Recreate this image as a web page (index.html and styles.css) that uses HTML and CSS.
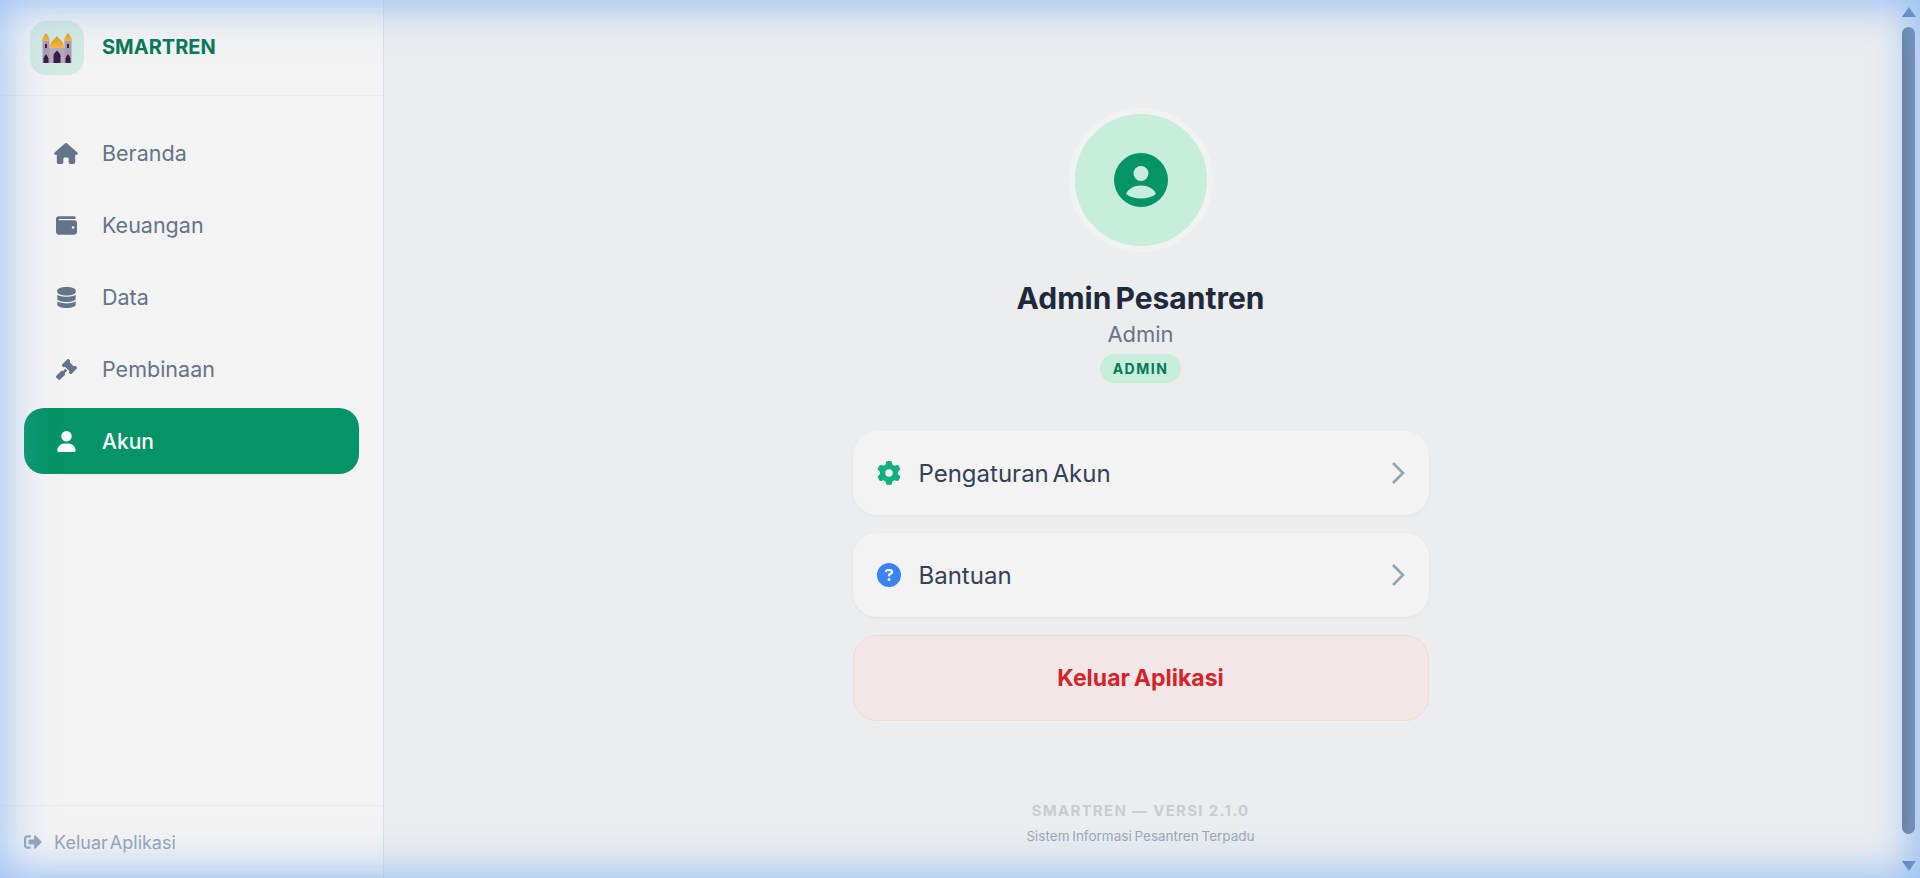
FILE: index.html
```html
<!DOCTYPE html>
<html lang="id">
<head>
  <meta charset="UTF-8">
  <meta name="viewport" content="width=device-width, initial-scale=1.0">
  <title>Smartren</title>
  <link rel="stylesheet" href="styles.css">
</head>
<body>
  <div class="app">
    <aside class="sidebar">
      <div class="brand">
        <div class="brand-logo">
          <svg viewBox="0 0 32 30" width="32" height="30">
            <defs>
              <linearGradient id="dome" x1="0" y1="0" x2="0" y2="1">
                <stop offset="0" stop-color="#e3952a"/>
                <stop offset="1" stop-color="#f5b93c"/>
              </linearGradient>
            </defs>
            <path d="M7 15h18v15H7z" fill="#b5abb9"/>
            <path d="M1.500 7.500h7v22.500h-7zM23.500 7.500h7v22.500h-7z" fill="#a99db0"/>
            <path d="M1 8c0-3 2-5 4-8 2 3 4 5 4 8zM23 8c0-3 2-5 4-8 2 3 4 5 4 8z" fill="url(#dome)"/>
            <path d="M9 15c-.5-6 4-8 7-12 3 4 7.500 6 7 12z" fill="url(#dome)"/>
            <path d="M2.500 30v-4c0-2 1.500-3 2.500-5 1 2 2.500 3 2.500 5v4zM24.500 30v-4c0-2 1.500-3 2.500-5 1 2 2.500 3 2.500 5v4zM12.500 30v-7c0-2.500 2-3.500 3.500-5.500 1.500 2 3.500 3 3.500 5.500v7z" fill="#3a1a4a"/>
            <path d="M4 11h2v4H4zM26 11h2v4h-2z" fill="#3a1a4a"/>
          </svg>
        </div>
        <span class="brand-name">SMARTREN</span>
      </div>

      <nav class="nav">
        <a class="nav-item">
          <span class="nav-icon"><svg viewBox="0 0 576 512" width="24" height="21"><path d="M575.800 255.500c0 18-15 32.100-32 32.100h-32l.7 160.200c0 2.700-.2 5.400-.5 8.100V472c0 22.100-17.900 40-40 40H456c-1.100 0-2.200 0-3.300-.1c-1.400 .1-2.800 .1-4.200 .1H416 392c-22.100 0-40-17.900-40-40V448 384c0-17.700-14.300-32-32-32H256c-17.700 0-32 14.300-32 32v64 24c0 22.100-17.900 40-40 40H160 128.100c-1.500 0-3-.1-4.500-.2c-1.200 .1-2.400 .2-3.600 .2H104c-22.100 0-40-17.900-40-40V360c0-.9 0-1.900 .1-2.800V287.600H32c-18 0-32-14-32-32.100c0-9 3-17 10-24L266.400 8c7-7 15-8 22-8s15 2 21 7L564.800 231.500c8 7 12 15 11 24z"/></svg></span>
          Beranda
        </a>
        <a class="nav-item">
          <span class="nav-icon"><svg viewBox="0 0 512 512" width="21" height="21"><path d="M64 32C28.700 32 0 60.700 0 96V416c0 35.300 28.700 64 64 64H448c35.300 0 64-28.700 64-64V192c0-35.300-28.700-64-64-64H80c-8.800 0-16-7.200-16-16s7.200-16 16-16H448c17.700 0 32-14.300 32-32s-14.300-32-32-32H64zM416 272a32 32 0 1 1 0 64 32 32 0 1 1 0-64z"/></svg></span>
          Keuangan
        </a>
        <a class="nav-item">
          <span class="nav-icon"><svg viewBox="0 0 448 512" width="19" height="21"><path d="M448 80v48c0 44.200-100.300 80-224 80S0 172.200 0 128V80C0 35.800 100.300 0 224 0S448 35.800 448 80zM393.200 214.700c20.800-7.400 39.900-16.900 54.800-28.600V288c0 44.200-100.300 80-224 80S0 332.200 0 288V186.100c14.900 11.800 34 21.200 54.800 28.600C99.700 230.700 159.500 240 224 240s124.300-9.300 169.200-25.300zM0 346.100c14.900 11.800 34 21.200 54.800 28.600C99.700 390.700 159.500 400 224 400s124.300-9.300 169.200-25.300c20.800-7.400 39.900-16.900 54.800-28.600V432c0 44.200-100.300 80-224 80S0 476.200 0 432V346.100z"/></svg></span>
          Data
        </a>
        <a class="nav-item">
          <span class="nav-icon"><svg viewBox="0 0 512 512" width="21" height="21"><path d="M318.600 9.400c-12.500-12.500-32.800-12.500-45.300 0l-120 120c-12.500 12.500-12.500 32.800 0 45.300l16 16c12.500 12.500 32.800 12.500 45.300 0l4-4L325.400 293.400l-4 4c-12.500 12.500-12.500 32.800 0 45.300l16 16c12.500 12.500 32.800 12.500 45.300 0l120-120c12.500-12.500 12.500-32.800 0-45.300l-16-16c-12.500-12.500-32.800-12.500-45.300 0l-4 4L330.600 74.600l4-4c12.500-12.500 12.500-32.800 0-45.300l-16-16zm-152 288c-12.500-12.500-32.800-12.500-45.300 0l-112 112c-12.500 12.500-12.500 32.800 0 45.300l48 48c12.500 12.500 32.800 12.500 45.300 0l112-112c12.500-12.500 12.500-32.800 0-45.300l-1.400-1.400L272 285.300 226.700 240 168 298.700l-1.400-1.400z"/></svg></span>
          Pembinaan
        </a>
        <a class="nav-item active">
          <span class="nav-icon"><svg viewBox="0 0 448 512" width="19" height="21"><path d="M224 256A128 128 0 1 0 224 0a128 128 0 1 0 0 256zm-45.700 48C79.800 304 0 383.800 0 482.300C0 498.700 13.300 512 29.700 512H418.300c16.400 0 29.700-13.300 29.700-29.700C448 383.800 368.200 304 269.700 304H178.300z"/></svg></span>
          Akun
        </a>
      </nav>

      <div class="side-footer">
        <svg viewBox="0 0 512 512" width="18" height="18"><path d="M497 273L329 441c-15 15-41 4.500-41-17v-96H152c-13.300 0-24-10.700-24-24v-96c0-13.300 10.700-24 24-24h136V88c0-21.400 25.900-32 41-17l168 168c9.300 9.400 9.300 24.600 0 34zM192 436v-40c0-6.600-5.400-12-12-12H96c-17.700 0-32-14.300-32-32V160c0-17.700 14.300-32 32-32h84c6.600 0 12-5.400 12-12V76c0-6.600-5.400-12-12-12H96c-53 0-96 43-96 96v192c0 53 43 96 96 96h84c6.600 0 12-5.400 12-12z"/></svg>
        Keluar Aplikasi
      </div>
    </aside>

    <main class="main">
      <div class="avatar">
        <svg viewBox="0 0 54 54" width="54" height="54">
          <circle cx="27" cy="27" r="27" fill="#059467"/>
          <circle cx="27" cy="20.500" r="7.500" fill="#c6eedb"/>
          <path d="M12 41c2.500-5.500 8-8.500 15-8.500s12.500 3 15 8.500c-3.500 2.800-9 4.500-15 4.500s-11.500-1.700-15-4.500z" fill="#c6eedb"/>
        </svg>
      </div>
      <h1 class="profile-name">Admin Pesantren</h1>
      <div class="profile-role">Admin</div>
      <span class="badge">ADMIN</span>

      <div class="menu">
        <a class="menu-row">
          <svg class="gear" viewBox="0 0 512 512" width="24" height="24"><path d="M495.900 166.600c3.200 8.700 .5 18.400-6.400 24.600l-43.300 39.400c1.100 8.300 1.700 16.800 1.700 25.400s-.6 17.100-1.700 25.400l43.300 39.400c6.900 6.200 9.600 15.900 6.400 24.600c-4.400 11.900-9.700 23.300-15.800 34.300l-4.700 8.100c-6.600 11-14 21.400-22.100 31.200c-5.900 7.200-15.700 9.600-24.500 6.800l-55.700-17.700c-13.400 10.300-28.200 18.900-44 25.400l-12.500 57.100c-2 9.100-9 16.300-18.200 17.800c-13.800 2.300-28 3.500-42.500 3.500s-28.700-1.200-42.500-3.500c-9.200-1.500-16.200-8.700-18.200-17.800l-12.500-57.100c-15.800-6.500-30.600-15.100-44-25.400L83.100 425.900c-8.800 2.800-18.600 .3-24.500-6.800c-8.100-9.800-15.500-20.200-22.100-31.200l-4.700-8.100c-6.100-11-11.400-22.400-15.800-34.300c-3.200-8.700-.5-18.400 6.400-24.600l43.300-39.400C64.600 273.100 64 264.600 64 256s.6-17.100 1.700-25.400L22.400 191.200c-6.900-6.200-9.600-15.900-6.400-24.600c4.400-11.900 9.700-23.300 15.800-34.300l4.700-8.100c6.600-11 14-21.400 22.100-31.200c5.900-7.200 15.700-9.600 24.500-6.800l55.700 17.700c13.400-10.300 28.200-18.900 44-25.400l12.500-57.100c2-9.100 9-16.300 18.200-17.800C227.300 1.200 241.500 0 256 0s28.700 1.200 42.500 3.500c9.200 1.500 16.200 8.700 18.200 17.800l12.500 57.100c15.800 6.500 30.600 15.100 44 25.400l55.700-17.700c8.800-2.800 18.600-.3 24.500 6.800c8.100 9.800 15.500 20.200 22.100 31.200l4.700 8.100c6.100 11 11.400 22.400 15.800 34.300zM256 336a80 80 0 1 0 0-160 80 80 0 1 0 0 160z"/></svg>
          <span class="menu-label">Pengaturan Akun</span>
          <svg class="chevron" viewBox="0 0 14 24" width="14" height="24"><path d="M2 2l10 10L2 22"/></svg>
        </a>
        <a class="menu-row">
          <svg class="help" viewBox="0 0 512 512" width="24" height="24"><path d="M256 512A256 256 0 1 0 256 0a256 256 0 1 0 0 512zM169.800 165.300c7.900-22.300 29.100-37.300 52.800-37.300h58.300c34.900 0 63.100 28.300 63.100 63.100c0 22.600-12.100 43.500-31.700 54.800L280 264.400c-.2 13-10.900 23.600-24 23.600c-13.300 0-24-10.700-24-24V250.500c0-8.600 4.600-16.500 12.100-20.800l44.300-25.400c4.700-2.700 7.600-7.700 7.600-13.100c0-8.400-6.800-15.100-15.100-15.100H222.600c-3.400 0-6.400 2.100-7.500 5.300l-.4 1.200c-4.400 12.500-18.200 19-30.600 14.600s-19-18.200-14.600-30.600l.4-1.200zM224 352a32 32 0 1 1 64 0 32 32 0 1 1 -64 0z"/></svg>
          <span class="menu-label">Bantuan</span>
          <svg class="chevron" viewBox="0 0 14 24" width="14" height="24"><path d="M2 2l10 10L2 22"/></svg>
        </a>
        <a class="logout-row">Keluar Aplikasi</a>
      </div>

      <div class="version">SMARTREN — VERSI 2.1.0</div>
      <div class="tagline">Sistem Informasi Pesantren Terpadu</div>
    </main>

    <div class="scrollbar">
      <span class="arrow-up"></span>
      <span class="thumb"></span>
      <span class="arrow-down"></span>
    </div>
  </div>
  <div class="edge-glow"></div>
</body>
</html>
```

FILE: styles.css
```css
* {
  box-sizing: border-box;
}
html, body {
  margin: 0;
  padding: 0;
  height: 100%;
  overflow: hidden;
}
body {
  font-family: Inter, 'Liberation Sans', sans-serif;
  background: #ecedef;
  color: #1e293b;
}
.app {
  display: flex;
  height: 878px;
}

/* sidebar */
.sidebar {
  width: 384px;
  flex: none;
  display: flex;
  flex-direction: column;
  background: #f3f3f3;
  border-right: 1px solid #d9dfe8;
}
.brand {
  height: 96px;
  flex: none;
  display: flex;
  align-items: center;
  gap: 18px;
  padding: 0 30px;
  border-bottom: 1px solid #e8ebee;
}
.brand-logo {
  width: 54px;
  height: 54px;
  border-radius: 16px;
  background: #d3e9e2;
  display: flex;
  align-items: center;
  justify-content: center;
}
.brand-name {
  font-size: 20px;
  font-weight: 700;
  color: #047857;
  padding-bottom: 2px;
}
.nav {
  flex: 1;
  display: flex;
  flex-direction: column;
  gap: 6px;
  padding: 24px;
}
.nav-item {
  height: 66px;
  display: flex;
  align-items: center;
  gap: 18px;
  padding: 0 24px;
  border-radius: 20px;
  font-size: 21.500px;
  color: #64748b;
}
.nav-icon {
  width: 36px;
  display: flex;
  justify-content: center;
}
.nav-icon svg {
  fill: currentColor;
}
.nav-item.active {
  background: #059467;
  color: #fff;
  font-size: 21px;
  font-weight: 500;
}
.side-footer {
  height: 73px;
  flex: none;
  display: flex;
  align-items: center;
  gap: 12px;
  padding: 0 24px;
  border-top: 1px solid #e8ebee;
  font-size: 18px;
  word-spacing: -3px;
  color: #94a3b8;
}
.side-footer svg {
  fill: currentColor;
}

/* main */
.main {
  flex: 1;
  display: flex;
  flex-direction: column;
  align-items: center;
  padding-top: 108px;
}
.avatar {
  width: 144px;
  height: 144px;
  border-radius: 50%;
  background: #c6eedb;
  border: 6px solid #f2f2f2;
  display: flex;
  align-items: center;
  justify-content: center;
}
.profile-name {
  margin: 26px 0 0;
  font-size: 30px;
  line-height: 40px;
  font-weight: 700;
  word-spacing: -3px;
}
.profile-role {
  margin-top: 2px;
  font-size: 22px;
  line-height: 28px;
  color: #677489;
}
.badge {
  margin-top: 6px;
  height: 29px;
  width: 81px;
  border-radius: 15px;
  background: #c6eedb;
  color: #047857;
  font-size: 14px;
  font-weight: 700;
  letter-spacing: 1.500px;
  display: flex;
  align-items: center;
  justify-content: center;
}
.menu {
  width: 576px;
  margin-top: 48px;
  display: flex;
  flex-direction: column;
  gap: 18px;
}
.menu-row {
  height: 84px;
  display: flex;
  align-items: center;
  gap: 18px;
  padding: 0 24px;
  border-radius: 24px;
  background: #f3f3f3;
  box-shadow: 0 1px 3px rgba(0, 0, 0, 0.05);
  font-size: 24px;
  word-spacing: -3px;
  color: #334155;
}
.menu-label {
  flex: 1;
}
.gear {
  fill: #10b07f;
}
.help {
  fill: #3b82f6;
}
.chevron {
  fill: none;
  stroke: #94a3b8;
  stroke-width: 2.600;
}
.logout-row {
  height: 86px;
  display: flex;
  align-items: center;
  justify-content: center;
  border-radius: 24px;
  background: #f2e7e7;
  border: 1px solid #f7d6d6;
  font-size: 23px;
  font-weight: 700;
  word-spacing: -1.500px;
  color: #d7232a;
}
.version {
  margin-top: 80px;
  font-size: 15px;
  line-height: 20px;
  font-weight: 700;
  letter-spacing: 1.300px;
  color: #c9ccd2;
}
.tagline {
  margin-top: 5px;
  font-size: 13.500px;
  line-height: 20px;
  word-spacing: -1px;
  color: #9ea6b5;
}

/* scrollbar */
.scrollbar {
  width: 23px;
  flex: none;
  display: flex;
  flex-direction: column;
  align-items: center;
  padding: 7px 5px 0;
}
.arrow-up, .arrow-down {
  width: 0;
  height: 0;
  flex: none;
  border-left: 7.500px solid transparent;
  border-right: 7.500px solid transparent;
}
.arrow-up {
  border-bottom: 10px solid #4f6a9c;
}
.arrow-down {
  border-top: 10px solid #4f6a9c;
  margin-top: 27px;
}
.thumb {
  width: 13px;
  height: 807px;
  flex: none;
  margin-top: 10px;
  border-radius: 7px;
  background: #65758f;
}

/* blue glow round the window */
.edge-glow {
  position: fixed;
  inset: 0;
  pointer-events: none;
  box-shadow: inset 0 0 45px 4px rgba(130, 180, 245, 0.7), inset -10px 0 30px rgba(130, 180, 245, 0.3);
}
```
